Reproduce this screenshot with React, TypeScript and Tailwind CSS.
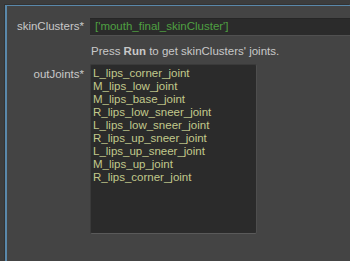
import React from "react";

const joints = [
  "L_lips_corner_joint",
  "M_lips_low_joint",
  "M_lips_base_joint",
  "R_lips_low_sneer_joint",
  "L_lips_low_sneer_joint",
  "R_lips_up_sneer_joint",
  "L_lips_up_sneer_joint",
  "M_lips_up_joint",
  "R_lips_corner_joint",
];

export default function App() {
  return (
    <div
      className="w-[350px] h-[261px] bg-[#3d3d3d] pt-[5px] pl-[5px] overflow-hidden flex"
      style={{ fontFamily: '"Liberation Sans", Arial, sans-serif' }}
    >
      <div className="flex-1 bg-[#444444] border-t border-l-2 border-[#5a88aa] shadow-[-1px_-1px_0_#333333] pt-[12px] text-[11.5px] text-[#c8c8c8]">
        <div className="flex items-center h-[18px]">
          <div className="w-[78px] text-right pr-[1px]">skinClusters*</div>
          <div className="ml-[5px] flex-1 h-[18px] bg-[#2b2b2b] border-t border-[#262626] border-b border-b-[#505050] flex items-center pl-[5px] text-[#4fa042]">
            ['mouth_final_skinCluster']
          </div>
        </div>
        <div className="ml-[84px] mt-[8px] h-[14px] leading-[14px]">
          Press <span className="font-bold">Run</span> to get skinClusters' joints.
        </div>
        <div className="flex mt-[6px]">
          <div className="w-[78px] text-right pr-[1px] pt-[2px]">outJoints*</div>
          <div className="ml-[5px] w-[167px] h-[170px] bg-[#2b2b2b] rounded-[2px] border border-[#3a3a3a] border-b-[#5a5a5a] border-r-[#4e4e4e] pl-[2px] pt-[2px] text-[#c2c98c]">
            {joints.map((j) => (
              <div key={j} className="h-[13px] leading-[13px]">
                {j}
              </div>
            ))}
          </div>
        </div>
      </div>
    </div>
  );
}
